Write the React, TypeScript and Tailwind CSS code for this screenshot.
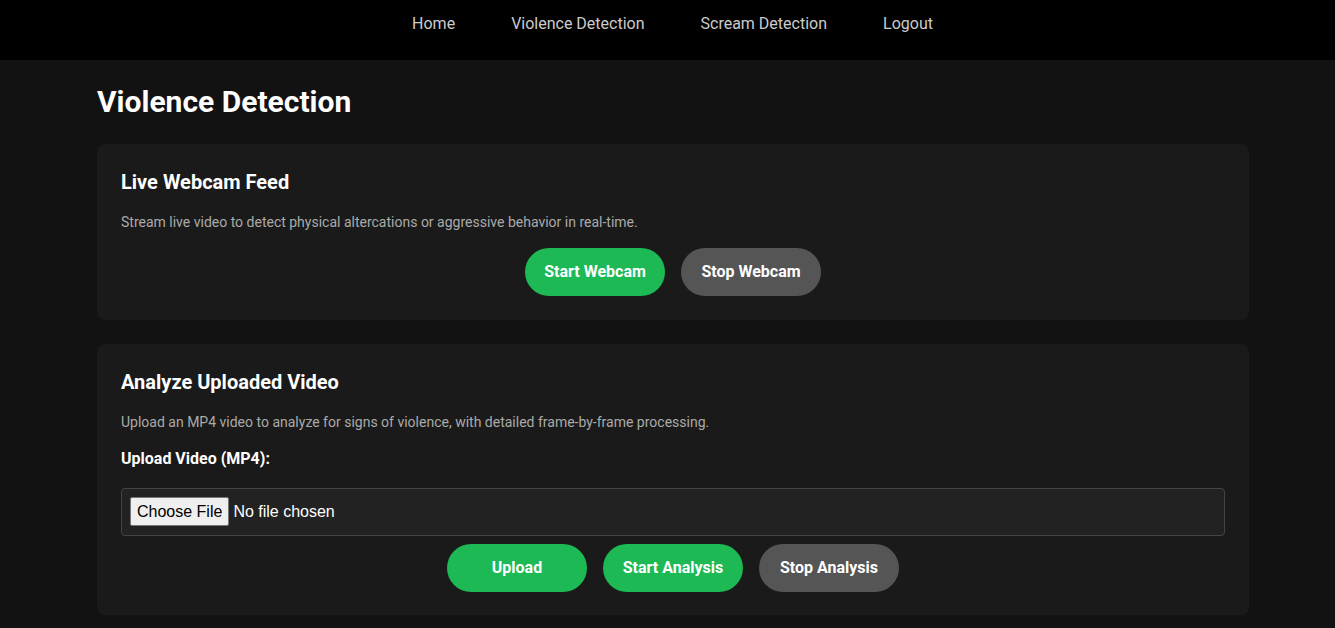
export default function App() {
  return (
    <div className="min-h-screen bg-[#121212] text-white font-['Roboto',sans-serif] leading-[1.6]">
      <nav className="h-[60px] bg-black flex justify-center items-start pt-[12px] pl-[10px]">
        <div className="flex gap-14 text-base text-[#cccccc]">
          <a href="#">Home</a>
          <a href="#">Violence Detection</a>
          <a href="#">Scream Detection</a>
          <a href="#">Logout</a>
        </div>
      </nav>

      <main className="ml-[97px] w-[1152px] pt-[24px] pb-6">
        <h1 className="text-[30px] font-bold leading-[36px] mb-6">Violence Detection</h1>

        <section className="bg-[#1a1a1a] rounded-lg p-6 mb-6">
          <h3 className="text-xl font-bold leading-[28px] mb-4">Live Webcam Feed</h3>
          <p className="text-sm text-[#aaaaaa] leading-5 mb-4">
            Stream live video to detect physical altercations or aggressive behavior in real-time.
          </p>
          <div className="flex justify-center gap-4">
            <button className="w-[140px] h-12 rounded-full bg-[#1db954] font-bold">Start Webcam</button>
            <button className="w-[140px] h-12 rounded-full bg-[#555555] font-bold">Stop Webcam</button>
          </div>
        </section>

        <section className="bg-[#1a1a1a] rounded-lg px-6 pt-6 pb-[23px]">
          <h3 className="text-xl font-bold leading-[28px] mb-4">Analyze Uploaded Video</h3>
          <p className="text-sm text-[#aaaaaa] leading-5 mb-[15px]">
            Upload an MP4 video to analyze for signs of violence, with detailed frame-by-frame processing.
          </p>
          <label className="block font-bold leading-6 mb-[17px]">Upload Video (MP4):</label>
          <input
            type="file"
            accept="video/mp4"
            className="block w-full h-12 pt-[8px] pb-[8px] px-2 bg-[#222222] border border-[#444444] rounded text-white text-base leading-[1.6] font-['Liberation_Sans',Arial,sans-serif] file:bg-[#efefef] file:text-black file:border file:border-[#767676] file:rounded-[2px] file:px-[6px] file:h-[29px] file:mr-[4px]"
          />
          <div className="flex justify-center gap-4 mt-2">
            <button className="w-[140px] h-12 rounded-full bg-[#1db954] font-bold">Upload</button>
            <button className="w-[140px] h-12 rounded-full bg-[#1db954] font-bold">Start Analysis</button>
            <button className="w-[140px] h-12 rounded-full bg-[#555555] font-bold">Stop Analysis</button>
          </div>
        </section>
      </main>
    </div>
  );
}
